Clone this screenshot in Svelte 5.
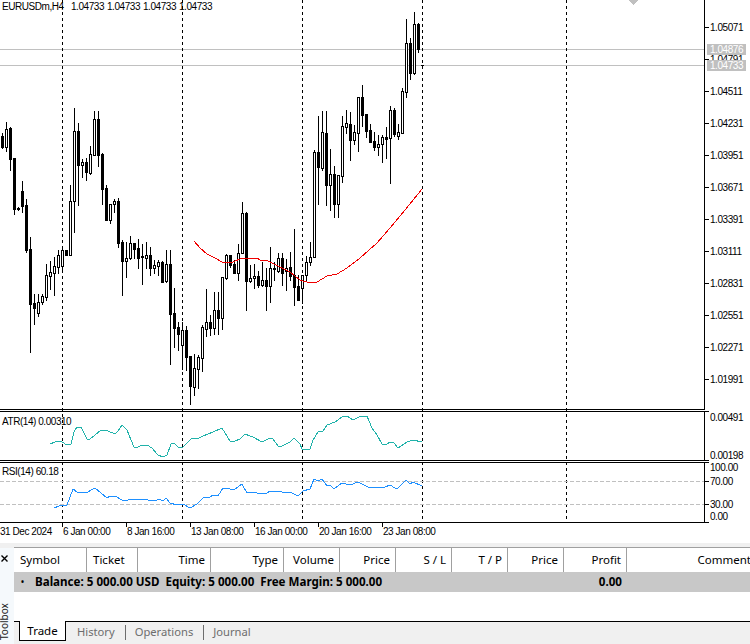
<script>
// [high, bodyTop, bodyBottom, low, filled]
const candles = [
  [133,136,147,148,1],[122,129,147,151,0],[127,128,159,170,1],[158,158,209,214,1],[207,208,209,210,1],
  [181,191,206,212,1],[199,205,250,252,1],[237,249,304,352,1],[294,303,308,324,1],[294,302,313,316,0],
  [294,296,302,304,0],[264,275,297,300,0],[261,272,276,289,0],[257,266,273,295,0],[250,255,267,273,0],
  [246,250,266,270,0],[250,250,255,255,1],[185,201,255,255,0],[108,131,201,232,0],[123,131,165,205,1],
  [159,162,165,177,0],[158,162,172,180,1],[146,154,173,174,0],[111,119,155,155,0],[111,119,155,166,1],
  [153,154,189,204,1],[185,188,220,220,1],[204,204,220,223,0],[199,201,204,212,0],[198,201,243,247,1],
  [240,242,261,295,1],[242,258,261,277,0],[236,243,258,259,0],[243,243,249,258,1],[239,248,258,268,1],
  [244,256,257,284,1],[242,255,258,268,0],[247,255,268,275,1],[260,265,268,273,0],[260,262,266,275,0],
  [261,262,282,282,1],[250,264,281,282,0],[250,264,314,364,1],[288,313,328,347,1],[322,327,334,350,1],
  [322,330,345,369,0],[326,330,357,370,1],[356,356,386,404,1],[354,368,387,395,0],[355,357,369,388,0],
  [325,327,358,371,0],[289,322,329,336,0],[315,322,328,335,1],[292,310,328,334,0],[292,310,318,334,1],
  [277,277,318,329,0],[254,255,278,279,0],[255,255,265,267,1],[260,264,273,273,1],[244,253,273,280,0],
  [202,213,253,253,0],[212,213,281,310,1],[265,278,281,282,0],[264,276,278,288,0],[271,276,285,287,1],
  [262,280,285,286,0],[268,280,286,310,1],[247,268,286,302,0],[262,268,269,280,1],[253,258,271,272,0],
  [253,258,273,285,1],[259,268,271,290,0],[252,267,276,280,1],[229,275,287,305,1],[275,286,300,300,1],
  [275,275,288,303,0],[256,262,275,280,0],[242,257,262,265,0],[150,152,257,257,0],[116,152,167,204,1],
  [111,132,168,170,0],[111,133,185,205,1],[149,174,185,210,0],[166,174,204,217,1],[175,175,204,217,0],
  [116,126,176,182,0],[110,123,127,133,0],[112,124,140,160,1],[125,132,140,144,0],[97,97,133,151,0],
  [85,97,115,126,1],[114,114,131,137,1],[124,130,142,142,1],[132,141,147,150,1],[135,144,147,155,0],
  [135,137,144,162,0],[127,137,139,158,1],[106,110,138,183,0],[108,110,134,136,1],[124,132,136,139,0],
  [88,91,133,133,0],[19,43,92,97,0],[38,43,73,79,1],[12,24,73,74,0],[23,24,49,52,1],[65,65,65,65,1]
]
const candleX = (i) => 2 + 4 * i

const maLine = "194,241 200,248 207,254 215,258 222,262 233,262 242,258 257,258 260,260 268,261 280,267 290,272 300,280 310,283 317,282 327,276 337,274 347,268 360,258 377,243 390,228 405,210 422,189"
const atrLine = "50,444 55,442 58,441 62,442 67,445 71,444 74,432 77,427 81,427 83,431 87,439 90,439 95,435 101,430 108,431 115,434 118,431 122,425 127,430 131,440 134,447 138,447 142,445 147,445 152,448 158,455 163,457 167,455 171,444 174,443 178,447 182,448 192,438 197,439 203,436 213,432 222,428 230,441 235,441 240,439 245,434 250,436 253,437 262,442 270,438 273,439 278,446 282,446 290,442 294,438 300,444 302,449 310,449 313,440 318,432 323,431 327,425 335,422 342,417 347,416 353,420 361,416 367,416 372,428 377,435 382,444 387,444 390,442 394,443 398,448 407,442 413,440 422,442"
const rsiLine = "54,508 59,506 67,505 73,489 77,492 86,493 95,488 107,498 110,496 115,496 122,500 128,500 133,499 148,500 157,500 159,499 163,501 166,498 170,503 177,505 183,504 190,508 197,504 204,497 209,498 213,495 218,496 223,488 230,489 234,490 242,484 247,493 250,492 257,493 267,493 270,491 277,491 282,492 290,492 298,496 303,491 310,489 314,479 318,481 322,479 327,486 330,485 334,489 342,483 350,485 358,482 370,488 385,487 390,485 395,488 398,488 406,480 410,484 413,482 422,486"

const priceLabels = ["1.05071","1.04791","1.04511","1.04231","1.03951","1.03671","1.03391","1.03111","1.02831","1.02551","1.02271","1.01991"]
const subLabels = [
  { y: 421, t: "0.00491" }, { y: 459, t: "0.00198" },
  { y: 471, t: "100.00" }, { y: 485, t: "70.00" }, { y: 508, t: "30.00" }, { y: 520, t: "0.00" }
]
const axisTicks = [411, 460, 462, 481, 504, 522]
const timeLabels = [
  { x: -1, t: "31 Dec 2024" }, { x: 62, t: "6 Jan 00:00", tick: 1 }, { x: 126, t: "8 Jan 16:00", tick: 1 },
  { x: 190, t: "13 Jan 08:00", tick: 1 }, { x: 254, t: "16 Jan 00:00", tick: 1 },
  { x: 318, t: "20 Jan 16:00", tick: 1 }, { x: 382, t: "23 Jan 08:00", tick: 1 }
]

const columns = [
  { name: "Symbol", width: 73, left: true }, { name: "Ticket", width: 51, left: true },
  { name: "Time", width: 73 }, { name: "Type", width: 73 }, { name: "Volume", width: 56 },
  { name: "Price", width: 56 }, { name: "S / L", width: 56 }, { name: "T / P", width: 56 },
  { name: "Price", width: 56 }, { name: "Profit", width: 63 }, { name: "Comment", width: 124, last: true }
]
</script>

<svg class="chart" width="750" height="543" viewBox="0 0 750 543">
  <!-- price lines -->
  <rect class="bid" x="0" y="49" width="704" height="1" />
  <rect class="bid" x="0" y="65" width="704" height="1" />

  <!-- period separators -->
  {#each [62, 182, 302, 422] as x}
    <line class="sep" x1={x + 0.5} y1="0" x2={x + 0.5} y2="522" />
  {/each}
  <line class="sep" x1="566.5" y1="0" x2="566.5" y2="522" />

  {#each candles as [high, top, bottom, low, filled], i}
    {@const x = candleX(i)}
    <rect x={x} y={high} width="1" height={low - high + 1} fill="#000" />
    {#if bottom === top}
      <rect x={x - 1} y={top} width="3" height="1" fill="#000" />
    {:else}
      <rect x={x - 1} y={top} width="3" height={bottom - top + 1} fill="#000" />
      {#if !filled && bottom - top > 1}
        <rect x={x} y={top + 1} width="1" height={bottom - top - 1} fill="#fff" />
      {/if}
    {/if}
  {/each}

  <polyline class="line" stroke="#f00000" points={maLine} />

  <!-- indicator level lines -->
  <line class="level" x1="0" y1="481.5" x2="704" y2="481.5" />
  <line class="level" x1="0" y1="504.5" x2="704" y2="504.5" />
  <polyline class="line" stroke="#20b2aa" points={atrLine} />
  <polyline class="line" stroke="#1e90ff" points={rsiLine} />

  <!-- pane borders -->
  <rect x="0" y="409" width="704" height="1" />
  <rect x="0" y="411" width="704" height="1" />
  <rect x="0" y="460" width="704" height="1" />
  <rect x="0" y="462" width="704" height="1" />
  <rect x="0" y="522" width="704" height="1" />
  <rect x="704" y="0" width="1" height="410" />
  <rect x="704" y="411" width="1" height="50" />
  <rect x="704" y="462" width="1" height="61" />

  <!-- price axis -->
  {#each priceLabels as t, i}
    <rect x="705" y={27 + i * 32} width="4" height="1" />
    <text class="tx" x="710" y={31 + i * 32}>{t}</text>
  {/each}
  {#each axisTicks as y}
    <rect x="705" y={y} width="4" height="1" />
  {/each}
  {#each subLabels as l}
    <text class="tx" x="710" y={l.y}>{l.t}</text>
  {/each}

  <rect class="bid" x="707" y="44" width="39" height="11" />
  <text class="tx white" x="710" y="53">1.04876</text>
  <rect class="bid" x="707" y="60" width="39" height="11" />
  <text class="tx white" x="710" y="69">1.04733</text>

  <polygon class="marker" points="629,0 638,0 633.5,5" />

  <!-- time axis -->
  {#each timeLabels as l}
    {#if l.tick}<rect x={l.x} y="523" width="1" height="4" />{/if}
    <text class="tx" x={l.x + 1} y="535">{l.t}</text>
  {/each}

  <text class="tx" x="2" y="10">EURUSDm,H4</text>
  <text class="tx" x="71" y="10">1.04733</text>
  <text class="tx" x="107" y="10">1.04733</text>
  <text class="tx" x="143" y="10">1.04733</text>
  <text class="tx" x="179" y="10">1.04733</text>
  <text class="tx" x="2" y="425">ATR(14) 0.00310</text>
  <text class="tx" x="2" y="475">RSI(14) 60.18</text>
</svg>

<section class="toolbox">
  <aside class="strip">
    <svg class="close" width="7" height="7" viewBox="0 0 7 7">
      <path d="M0.5 0.5 L6.5 6.5 M6.5 0.5 L0.5 6.5" stroke="#000" stroke-width="1.4" fill="none" />
    </svg>
    <span class="strip-label">Toolbox</span>
  </aside>
  <div class="panel">
    <div class="head">
      {#each columns as c}
        <div class="col" class:left={c.left} class:last={c.last} style="width:{c.width}px">{c.name}</div>
      {/each}
    </div>
    <div class="balance">
      <span class="dot">•</span>
      <span class="summary">Balance: 5 000.00 USD&nbsp; Equity: 5 000.00&nbsp; Free Margin: 5 000.00</span>
      <span class="profit">0.00</span>
    </div>
    <div class="rows"></div>
    <div class="tabs">
      <div class="tab active">Trade</div>
      <div class="tab">History</div>
      <div class="tab bar">Operations</div>
      <div class="tab bar">Journal</div>
    </div>
  </div>
</section>

<style>
:global(body) {
  background: #fff;
  overflow: hidden;
}
.chart {
  display: block;
  background: #fff;
  shape-rendering: crispEdges;
}
.bid {
  fill: #c0c0c0;
}
.sep {
  stroke: #000;
  stroke-width: 1;
  stroke-dasharray: 3 3;
}
.level {
  stroke: #c0c0c0;
  stroke-width: 1;
  stroke-dasharray: 4 2;
}
.line {
  fill: none;
  stroke-width: 1;
}
.marker {
  fill: #c0c0c0;
}
.tx {
  font-family: "Liberation Sans", sans-serif;
  font-size: 10px;
  letter-spacing: -0.45px;
  fill: #000;
}
.tx.white {
  fill: #fff;
}
.toolbox {
  display: flex;
  height: 101px;
  background: #f0f0f0;
  font-family: "Noto Sans", sans-serif;
  font-size: 11.5px;
  color: #000;
  overflow: hidden;
}
.strip {
  position: relative;
  width: 14px;
  flex: none;
  margin-top: 5px;
  background: #f5f9fc;
}
.close {
  position: absolute;
  left: 1px;
  top: 7px;
}
.strip-label {
  position: absolute;
  left: 0;
  top: 54px;
  writing-mode: vertical-rl;
  transform: rotate(180deg);
  font-size: 10px;
  line-height: 9px;
  height: 38px;
  white-space: nowrap;
  color: #222;
}
.panel {
  flex: 1;
  min-width: 0;
  margin-top: 4px;
  display: flex;
  flex-direction: column;
}
.head {
  display: flex;
  height: 25px;
  background: #fff;
  border-top: 1px solid #a0a0a0;
  box-sizing: border-box;
  white-space: nowrap;
}
.col {
  flex: none;
  box-sizing: border-box;
  padding: 0 5px;
  line-height: 24px;
  text-align: right;
  border-right: 1px solid #a0a0a0;
}
.col.left {
  text-align: left;
  padding-left: 6px;
}
.col.last {
  border-right: 0;
  padding-right: 0;
}
.balance {
  position: relative;
  height: 20px;
  line-height: 20px;
  background: #c8c8c8;
  font-size: 11.6px;
  font-weight: 700;
  white-space: nowrap;
}
.dot {
  position: absolute;
  left: 7px;
  font-size: 8px;
}
.summary {
  position: absolute;
  left: 21px;
}
.profit {
  position: absolute;
  right: 128px;
}
.rows {
  height: 29px;
  background: #fff;
}
.tabs {
  flex: 1;
  display: flex;
  align-items: flex-start;
  border-top: 1px solid #000;
  color: #6d6d6d;
}
.tab {
  box-sizing: border-box;
  height: 18px;
  margin-top: 1px;
  line-height: 18px;
  padding: 0 10px;
  font-size: 11.2px;
}
.tab.active {
  width: 47px;
  height: 20px;
  margin: -1px 1px 0 5px;
  padding: 0;
  text-align: center;
  line-height: 20px;
  font-size: 11.5px;
  color: #000;
  background: #fff;
  border: 1px solid #000;
  border-top: 0;
}
.tab.bar {
  position: relative;
}
.tab.bar::before {
  content: "";
  position: absolute;
  left: 0;
  top: 2px;
  height: 15px;
  width: 1px;
  background: #6d6d6d;
}
</style>
